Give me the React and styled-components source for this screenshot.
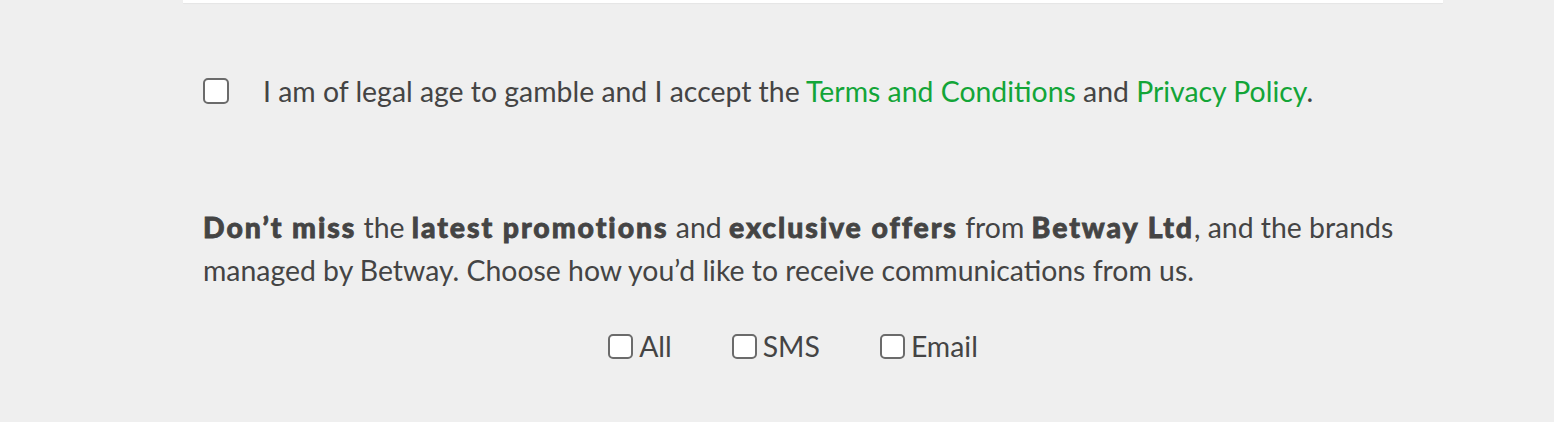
import React from "react";
import styled, { createGlobalStyle } from "styled-components";

const Global = createGlobalStyle`
  html, body { margin: 0; padding: 0; background: #efefef; }
  body { font-family: Lato, "Open Sans", sans-serif; color: #444; }
`;

const Page = styled.div`
  margin: 0 111px 0 183px;
  min-height: 422px;
`;

const CardEdge = styled.div`
  height: 3px;
  background: #fff;
  box-shadow: 0 1px 1px rgba(0,0,0,0.04);
`;

const TermsRow = styled.label`
  display: flex;
  align-items: center;
  gap: 34px;
  padding: 72px 20px 0;
  font-size: 28.4px;
  line-height: 32px;
`;

const Box = styled.span`
  flex: none;
  width: ${p => p.$size}px;
  height: ${p => p.$size}px;
  box-sizing: border-box;
  border: 2px solid #6b6b6b;
  border-radius: 5px;
  background: #fff;
`;

const Link = styled.a`
  color: #13a538;
  text-decoration: none;
`;

const Promo = styled.p`
  margin: 99px 0 0;
  padding: 0 20px;
  font-size: 28.4px;
  line-height: 43px;
`;

const Strong = styled.b`
  font-weight: 900;
  letter-spacing: 1.95px;
  -webkit-text-stroke: 0.8px #444;
`;

const Options = styled.div`
  display: flex;
  justify-content: center;
  gap: 60px;
  margin-top: 38px;
  padding-right: 40px;
`;

const Option = styled.label`
  display: flex;
  align-items: center;
  gap: 6px;
  font-size: 28.4px;
  line-height: 32px;
`;

export default function App() {
  return (
    <>
      <Global />
      <Page>
        <CardEdge />
        <TermsRow>
          <Box $size={26} />
          <span>
            I am of legal age to gamble and I accept the{" "}
            <Link href="#">Terms and Conditions</Link> and{" "}
            <Link href="#">Privacy Policy</Link>.
          </span>
        </TermsRow>
        <Promo>
          <Strong>Don’t miss</Strong> the <Strong>latest promotions</Strong> and{" "}
          <Strong>exclusive offers</Strong> from <Strong>Betway Ltd</Strong>, and the brands
          managed by Betway. Choose how you’d like to receive communications from us.
        </Promo>
        <Options>
          <Option><Box $size={25} />All</Option>
          <Option><Box $size={25} />SMS</Option>
          <Option><Box $size={25} />Email</Option>
        </Options>
      </Page>
    </>
  );
}
